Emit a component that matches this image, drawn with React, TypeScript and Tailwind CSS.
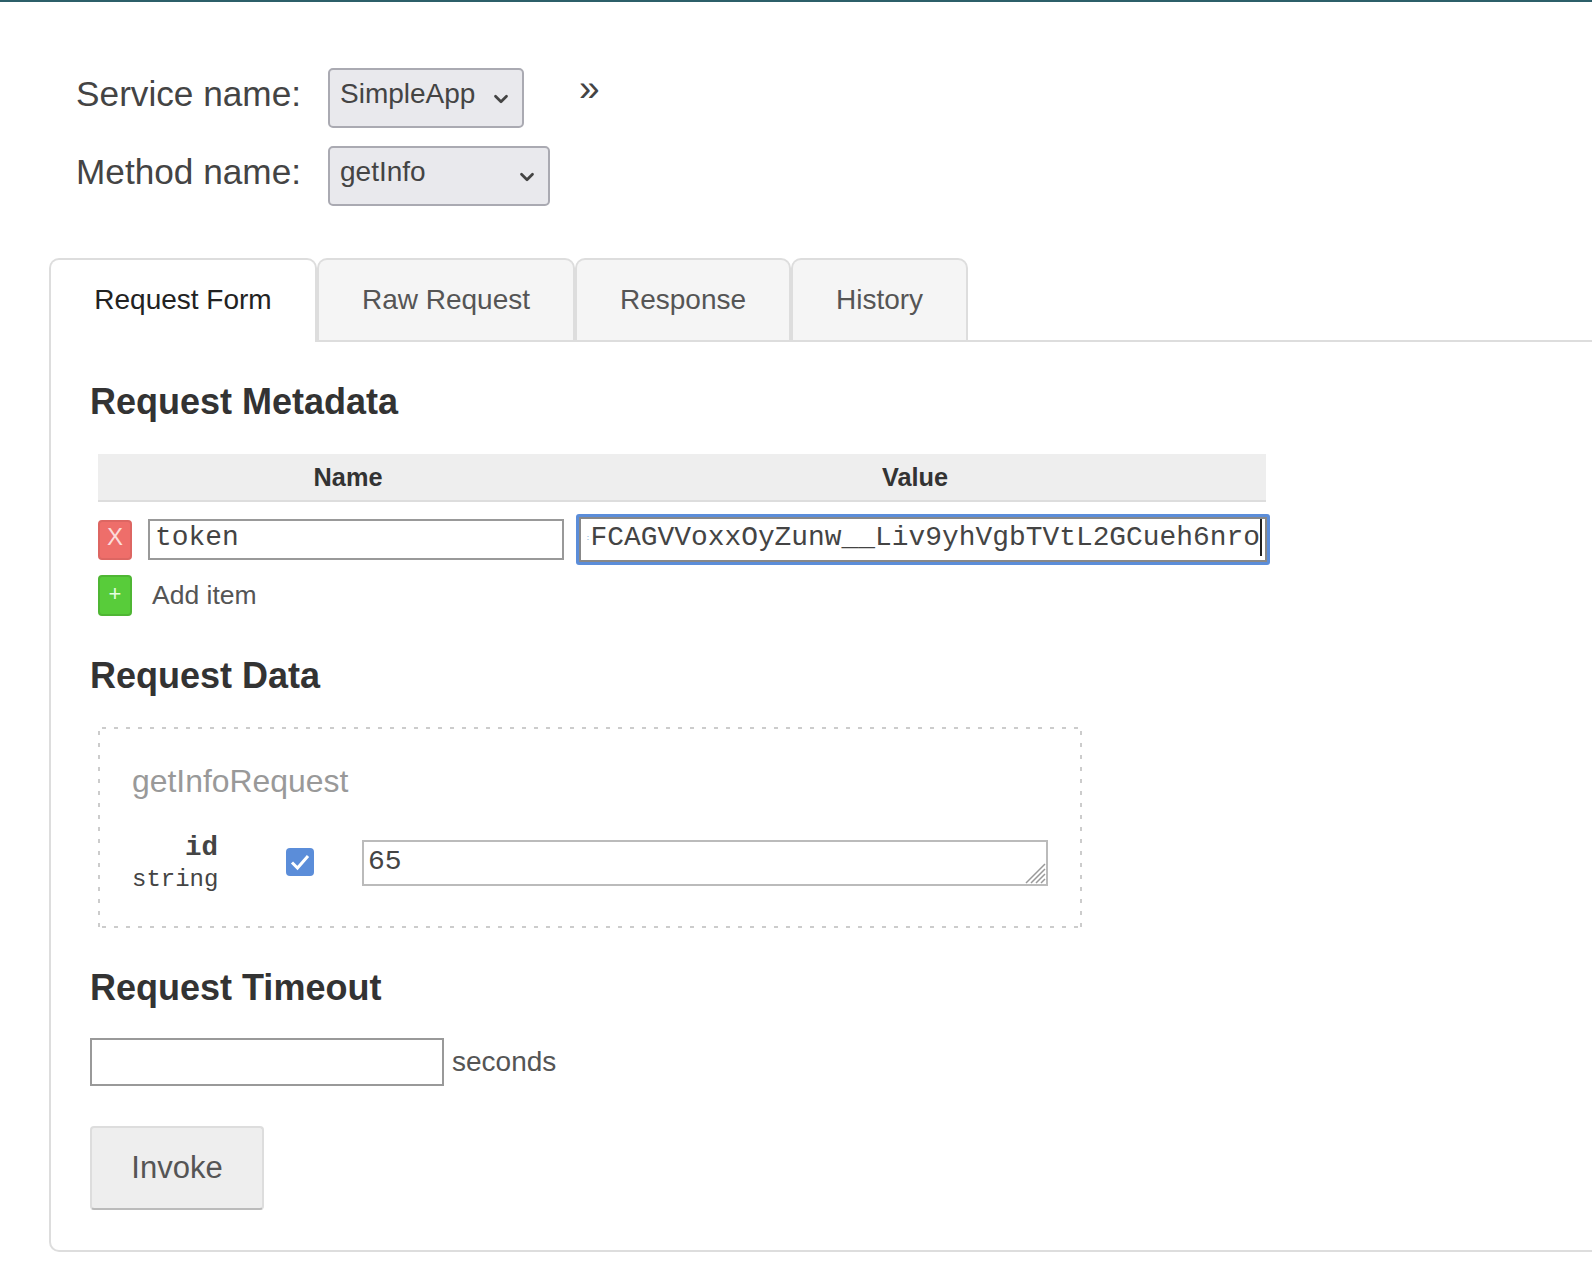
import { ChevronDown } from 'lucide-react';

const sans = "font-['Liberation_Sans',Arial,sans-serif]";
const mono = "font-['Liberation_Mono','Courier_New',monospace]";

function Heading({ children }: { children: string }) {
  return <h2 className="h-[40px] text-[36px] leading-[40px] font-bold text-[#333]">{children}</h2>;
}

function Select({ label, value, width }: { label: string; value: string; width: string }) {
  return (
    <div className="flex items-start">
      <span className="w-[301px] h-[52px] text-right text-[35.2px] leading-[52px] text-[#444]">{label}</span>
      <div className={`ml-[27px] h-[60px] ${width} flex items-start justify-between pl-[10px] pr-[10px] rounded-[5px] border-2 border-[#aaaab2] bg-[#e9e9ed] text-[28px] leading-[48px] text-[#444]`}>
        <span>{value}</span>
        <ChevronDown className="mt-[18px] w-[22px] h-[22px] text-[#444]" strokeWidth={3} />
      </div>
    </div>
  );
}

function Tab({ label, width }: { label: string; width: string }) {
  return (
    <div className={`${width} h-[82px] flex items-center justify-center rounded-t-[10px] border-2 border-b-0 border-[#ddd] bg-[#f5f5f5] text-[28px] leading-[34px] text-[#555]`}>
      {label}
    </div>
  );
}

export default function App() {
  return (
    <div className={`${sans} w-[1592px] h-[1276px] overflow-hidden bg-white`}>
      <div className="h-[2px] bg-[#2c5f69]" />

      {/* Service and method */}
      <div className="mt-[66px] flex flex-col gap-[18px]">
        <div className="flex items-start">
          <Select label="Service name:" value="SimpleApp" width="w-[196px]" />
          <span className="ml-[55px] -mt-[2px] text-[37px] leading-[46px] text-[#444]">»</span>
        </div>
        <Select label="Method name:" value="getInfo" width="w-[222px]" />
      </div>

      {/* Tabs */}
      <div className="mt-[52px] ml-[49px] flex w-[1560px] border-b-2 border-[#ddd]">
        <div className="w-[268px] h-[84px] -mb-[2px] flex items-center justify-center rounded-t-[10px] border-2 border-b-0 border-[#ddd] bg-white text-[28px] leading-[34px] pb-[2px] text-[#222]">
          Request Form
        </div>
        <Tab label="Raw Request" width="w-[258px]" />
        <Tab label="Response" width="w-[216px]" />
        <Tab label="History" width="w-[177px]" />
      </div>

      {/* Panel */}
      <div className="ml-[49px] w-[1560px] h-[910px] pl-[39px] pt-[40px] rounded-bl-[10px] border-l-2 border-b-2 border-[#ddd]">
        <Heading>Request Metadata</Heading>

        <div className="mt-[32px] ml-[8px] w-[1168px]">
          <div className="h-[48px] pt-[2px] flex items-center bg-[#eee] border-b-2 border-[#ddd] text-[25.3px] font-bold text-[#333]">
            <span className="w-[500px] text-center">Name</span>
            <span className="w-[634px] text-center">Value</span>
          </div>

          <div className="mt-[12px] flex items-center whitespace-nowrap">
            <div className="shrink-0 w-[34px] h-[40px] pb-[5px] flex items-center justify-center rounded-[4px] border-2 border-[#dd6662] bg-[#ee6e6a] text-[24px] text-[#fcdcda]">X</div>
            <div className={`${mono} shrink-0 ml-[16px] w-[416px] h-[41px] px-[5px] border-2 border-[#999] text-[27.9px] leading-[34px] text-[#444]`}>token</div>
            <div className="shrink-0 ml-[12px] p-[3px] rounded-[3px] bg-[#5b8dd9]">
              <div className={`${mono} w-[688px] h-[45px] flex justify-end pr-[3px] border-2 border-[#888] bg-white text-[27.9px] leading-[38px] text-[#444]`}>
                <span className="w-[5px] text-[8px] text-[#8fb4dc]">:</span>
                <span className="shrink-0 border-r-2 border-[#222] h-[37px]">FCAGVVoxxOyZunw__Liv9yhVgbTVtL2GCueh6nro</span>
              </div>
            </div>
          </div>

          <div className="mt-[10px] flex items-center">
            <div className="w-[34px] h-[41px] pb-[5px] flex items-center justify-center rounded-[4px] border-2 border-[#4fb634] bg-[#58cc3a] text-[22px] text-[#e6ffe0]">+</div>
            <span className="ml-[20px] text-[26.5px] text-[#555]">Add item</span>
          </div>
        </div>

        <div className="mt-[40px]"><Heading>Request Data</Heading></div>

        <div className="mt-[31px] ml-[8px] w-[984px] h-[201px] pl-[34px] pr-[34px] pt-[34px] [background-image:linear-gradient(to_right,#ccc_4px,transparent_4px),linear-gradient(to_right,#ccc_4px,transparent_4px),linear-gradient(to_bottom,#ccc_4px,transparent_4px),linear-gradient(to_bottom,#ccc_4px,transparent_4px)] [background-size:12px_2px,12px_2px,2px_12px,2px_12px] [background-position:4px_0,4px_100%,0_4px,100%_4px] [background-repeat:repeat-x,repeat-x,repeat-y,repeat-y]">
          <div className="text-[31.9px] leading-[40px] text-[#999]">getInfoRequest</div>
          <div className="mt-[30px] flex items-start">
            <div className={`${mono} w-[86px] text-right text-[#444]`}>
              <div className="text-[27.5px] leading-[33px] font-bold">id</div>
              <div className="text-[24px] leading-[32px]">string</div>
            </div>
            <div className="ml-[68px] mt-[17px] w-[28px] h-[28px] rounded-[4px] bg-[#5b8dd9]">
              <svg viewBox="0 0 28 28" className="w-[28px] h-[28px]" fill="none" stroke="#fff" strokeWidth="3"><path d="M6 14.5l5.5 5.5L22 8" /></svg>
            </div>
            <div className="relative ml-[48px] mt-[9px] w-[686px] h-[46px] pl-[4px] border-2 border-[#bbb] text-[28px] leading-[36px] text-[#444]">
              <span className={mono}>65</span>
              <svg viewBox="0 0 22 22" className="absolute right-0 bottom-0 w-[22px] h-[22px]" stroke="#999" strokeWidth="1.5"><path d="M2 21L21 2M7 21L21 7M12 21L21 12M17 21L21 17" /></svg>
            </div>
          </div>
        </div>

        <div className="mt-[40px]"><Heading>Request Timeout</Heading></div>

        <div className="mt-[30px] flex items-center">
          <div className="w-[354px] h-[48px] border-2 border-[#999]" />
          <span className="ml-[8px] text-[28px] text-[#555]">seconds</span>
        </div>

        <div className="mt-[40px] w-[174px] h-[84px] flex items-center justify-center rounded-[4px] border-2 border-[#ddd] border-b-[#bbb] bg-[#eee] text-[31px] text-[#555]">
          Invoke
        </div>
      </div>
    </div>
  );
}
